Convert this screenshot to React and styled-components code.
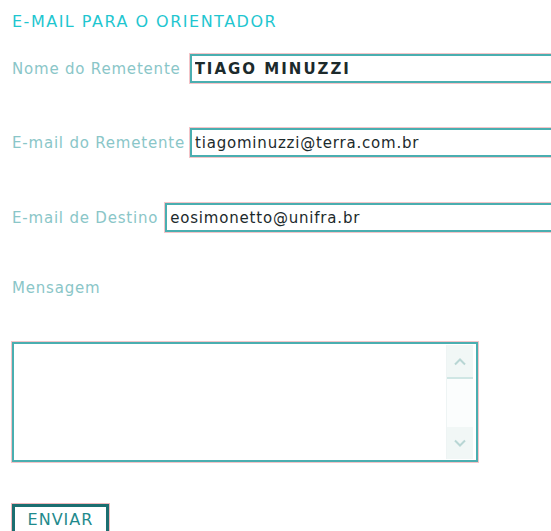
import React from 'react';
import styled, { createGlobalStyle } from 'styled-components';

const GlobalStyle = createGlobalStyle`
    html, body {
        margin: 0;
        padding: 0;
        background: #ffffff;
        overflow: hidden;
    }
    body {
        font-family: 'DejaVu Sans', Verdana, sans-serif;
    }
`;

const Page = styled.div`
    width: 551px;
    height: 531px;
    overflow: hidden;
    padding: 13px 0 0 12px;
    box-sizing: border-box;
`;

const Title = styled.h1`
    margin: 0 0 24px;
    font-size: 16px;
    font-weight: normal;
    line-height: 17px;
    color: #1fc6d0;
    letter-spacing: 1.5px;
    white-space: nowrap;
`;

const Row = styled.div`
    display: flex;
    align-items: center;
    gap: ${(props) => props.$gap || 8}px;
    margin-bottom: ${(props) => props.$after || 45}px;
    white-space: nowrap;
`;

const Label = styled.label`
    font-size: 15px;
    color: #8ac6c8;
    letter-spacing: 0.8px;
`;

const TextInput = styled.input`
    width: 420px;
    height: 29px;
    flex: none;
    box-sizing: border-box;
    border: 2px solid #4aaeb0;
    outline: 1px solid #f4c4c8;
    outline-offset: 0;
    padding: 0 3px;
    font-family: 'DejaVu Sans', Verdana, sans-serif;
    font-size: 15px;
    font-weight: ${(props) => (props.$bold ? 'bold' : 'normal')};
    letter-spacing: ${(props) => (props.$bold ? 2 : 0.8)}px;
    color: #1c2a2c;
    background: #fff;
`;

const MessageLabel = styled(Label)`
    display: block;
    margin: 0 0 45px;
`;

const MessageBox = styled.div`
    width: 466px;
    height: 120px;
    box-sizing: border-box;
    border: 2px solid #4aaeb0;
    outline: 1px solid #f4c4c8;
    display: flex;
    margin-bottom: 42px;
`;

const MessageArea = styled.textarea`
    flex: 1;
    border: none;
    resize: none;
    outline: none;
    background: #fff;
    font-family: 'DejaVu Sans', Verdana, sans-serif;
    font-size: 15px;
`;

const ScrollTrack = styled.div`
    width: 26px;
    margin: 1px 3px 1px 0;
    display: flex;
    flex-direction: column;
    justify-content: space-between;
    background: #fbfdfd;
    border-left: 1px solid #eef4f4;
`;

const ScrollButton = styled.div`
    height: 32px;
    display: flex;
    align-items: center;
    justify-content: center;
    background: #f1f7f6;
    border-bottom: ${(props) => (props.$up ? '2px solid #cfe6e4' : 'none')};
`;

const SubmitButton = styled.button`
    width: 97px;
    height: 32px;
    box-sizing: border-box;
    border: 3px solid #1c6e70;
    outline: 1px solid #f2b8bc;
    background: #fff;
    padding: 0 0 2px;
    font-family: 'DejaVu Sans', Verdana, sans-serif;
    font-size: 16px;
    letter-spacing: 1px;
    color: #1f8a8c;
    text-align: center;
    cursor: pointer;
`;

const Chevron = ({ up }) => (
    <svg width="14" height="9" viewBox="0 0 14 9">
        <path
            d={up ? 'M2 7.5 L7 2.5 L12 7.5' : 'M2 1.5 L7 6.5 L12 1.5'}
            fill="none"
            stroke="#b8d6d4"
            strokeWidth="2"
        />
    </svg>
);

const App = () => {
    return (
        <>
            <GlobalStyle />
            <Page>
                <Title>E-MAIL PARA O ORIENTADOR</Title>
                <Row $gap={9} $after={45}>
                    <Label>Nome do Remetente</Label>
                    <TextInput $bold defaultValue="TIAGO MINUZZI" />
                </Row>
                <Row $gap={5} $after={46}>
                    <Label>E-mail do Remetente</Label>
                    <TextInput defaultValue="tiagominuzzi@terra.com.br" />
                </Row>
                <Row $gap={7} $after={47}>
                    <Label>E-mail de Destino</Label>
                    <TextInput defaultValue="eosimonetto@unifra.br" />
                </Row>
                <MessageLabel>Mensagem</MessageLabel>
                <MessageBox>
                    <MessageArea />
                    <ScrollTrack>
                        <ScrollButton $up>
                            <Chevron up />
                        </ScrollButton>
                        <ScrollButton>
                            <Chevron />
                        </ScrollButton>
                    </ScrollTrack>
                </MessageBox>
                <SubmitButton>ENVIAR</SubmitButton>
            </Page>
        </>
    );
};

export default App;
